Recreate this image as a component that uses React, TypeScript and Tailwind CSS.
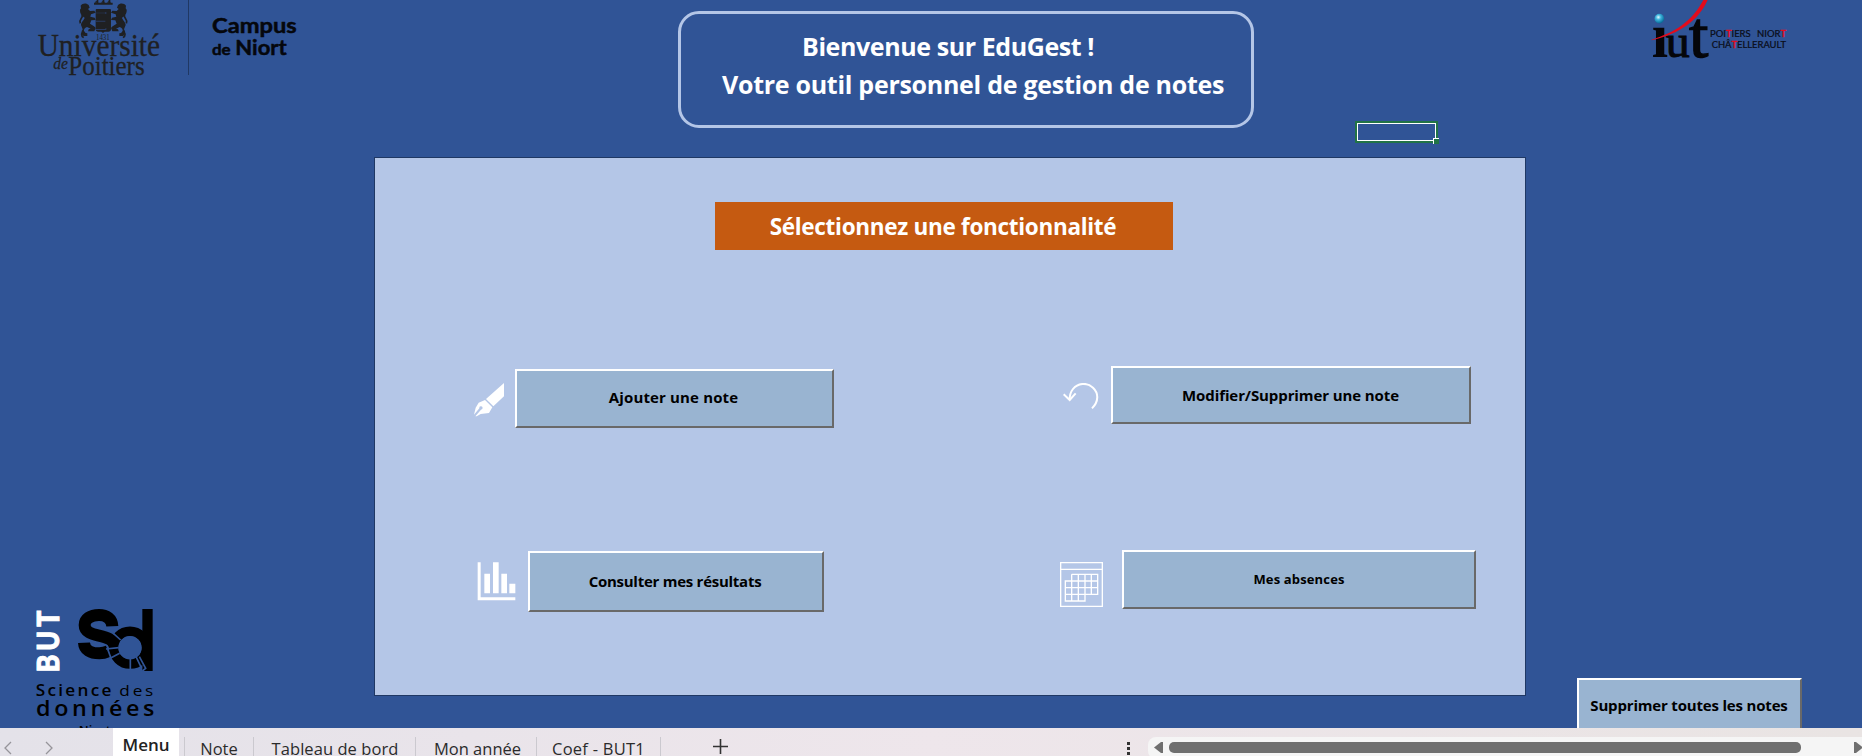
import type { ReactNode } from "react";

function UniversityLogo() {
  return (
    <svg width="340" height="100" viewBox="0 0 1020 300" className="block shrink-0" fill="#1f2022">
      <g>
        <path d="M282 8h56v6h-56zM290 0h5v10h-5zM308 0h5v10h-5zM326 0h5v10h-5z" />
        <path d="M284 8q5-10 11 0zM303 8q6-10 12 0zM321 8q6-10 12 0z" />
        <path d="M290 27h40q3 0 3 4v56q0 8-8 8h-11l-5 4-5-4h-9q-8 0-8-8V31q0-4 3-4z" />
        <path d="M288 38h26l5-3v8l-5-3h-26zM288 62h28v3h-28zM288 87h26l5-3v6h-31z" fill="#304f8d" opacity=".6" />
        <g id="lion">
          <path d="M242 17c5-8 18-9 24-2l3 8-5 4 6 6 13-1 4 6-14 5-2 7 13 3 3 7-13 1-4 10c6 5 14 6 17 13l-4 10h-19l2-6 6-2-11-5c-7 2-10 7-9 13l5 5 5 1v8h-11c-8-5-8-13-3-20l-5-13c0-9 9-14 11-22-9-5-15-14-14-24l3-4z" />
          <path d="M253 96c-11 1-10 12-2 17" fill="none" stroke="#1f2022" strokeWidth="5" />
          <path d="M241 70c-6-13 10-15 5-25" fill="none" stroke="#1f2022" strokeWidth="5" />
        </g>
        <use href="#lion" transform="translate(620 0) scale(-1 1)" />
      </g>
      <g fontFamily="Liberation Serif, serif">
        <text x="288" y="121" fontSize="22" textLength="41" lengthAdjust="spacingAndGlyphs">1431</text>
        <text x="113" y="167" fontSize="92" textLength="367" lengthAdjust="spacingAndGlyphs" stroke="#1f2022" strokeWidth=".8">Université</text>
        <text x="160" y="207" fontSize="52" fontStyle="italic" textLength="44" lengthAdjust="spacingAndGlyphs" stroke="#1f2022" strokeWidth=".8">de</text>
        <text x="205" y="225" fontSize="79" textLength="229" lengthAdjust="spacingAndGlyphs" stroke="#1f2022" strokeWidth=".8">Poitiers</text>
      </g>
      <rect x="564" y="0" width="3" height="225" fill="#203864" />
      <g fontFamily="Lato, sans-serif" fontWeight="700" fill="#05070c" stroke="#05070c" strokeWidth="1.5">
        <text x="636" y="99" fontSize="65" textLength="254" lengthAdjust="spacingAndGlyphs">Campus</text>
        <text x="636" y="166" fontSize="46" textLength="56" lengthAdjust="spacingAndGlyphs">de</text>
        <text x="706" y="166" fontSize="65" textLength="154" lengthAdjust="spacingAndGlyphs">Niort</text>
      </g>
    </svg>
  );
}

function IutLogo() {
  return (
    <svg width="180" height="70" viewBox="0 0 540 210" className="block shrink-0">
      <defs>
        <radialGradient id="ball" cx=".4" cy=".35" r=".65">
          <stop offset="0" stopColor="#e8fbff" />
          <stop offset=".4" stopColor="#3fb4dd" />
          <stop offset="1" stopColor="#066a96" />
        </radialGradient>
      </defs>
      <g fontFamily="Liberation Serif, serif" fill="#05060a" stroke="#05060a">
        <text x="65" y="170" fontSize="192" fontWeight="700" textLength="49" lengthAdjust="spacingAndGlyphs" strokeWidth="0">ı</text>
        <text x="107" y="170" fontSize="140" textLength="72" lengthAdjust="spacingAndGlyphs" strokeWidth="3">u</text>
        <text x="177" y="170" fontSize="196" textLength="58" lengthAdjust="spacingAndGlyphs" strokeWidth="4">t</text>
      </g>
      <path d="M65 119C135 96 183 68 220 0h13C205 62 150 101 65 121z" fill="#e30b1c" />
      <circle cx="88" cy="56" r="14.5" fill="url(#ball)" />
      <g fontFamily="Lato, sans-serif" fontSize="28" fill="#0a0d18" stroke="#0a0d18" strokeWidth=".7">
        <text x="240" y="111" textLength="122" lengthAdjust="spacingAndGlyphs">
          POI<tspan fill="#e30b1c" stroke="#e30b1c" strokeWidth="1.5">T</tspan>IERS
        </text>
        <text x="381" y="111" textLength="87" lengthAdjust="spacingAndGlyphs">
          NIOR<tspan fill="#e30b1c" stroke="#e30b1c" strokeWidth="1.5">T</tspan>
        </text>
        <text x="245" y="144" textLength="223" lengthAdjust="spacingAndGlyphs">
          CHÂ<tspan fill="#e30b1c" stroke="#e30b1c" strokeWidth="1.5">T</tspan>ELLERAULT
        </text>
      </g>
    </svg>
  );
}

function DataScienceLogo() {
  return (
    <svg width="200" height="138" viewBox="0 0 600 414" className="block shrink-0">
      <text transform="translate(177 247) rotate(-90) scale(.86 1)" fontFamily="Lato, sans-serif" fontWeight="900" fontSize="93" letterSpacing="14" fill="#fff" stroke="#fff" strokeWidth="3">BUT</text>
      <g fill="none" stroke="#000">
        <path d="M337 109C336 86 319 75 297 75c-26 0-43 12-43 30 0 22 22 27 43 32 25 6 42 11 46 29M252 158c1 22 20 32 46 32 10 0 18-2 27-6" strokeWidth="36" />
        <circle cx="390" cy="173" r="49" strokeWidth="29" />
      </g>
      <path d="M427 57h31v186h-31z" />
      <circle cx="390" cy="173" r="35" fill="#305496" />
      <g stroke="#305496" strokeWidth="5" fill="none">
        <path d="M340 130L362 150M318 177l38-4M325 208l34-18M391 200v40M408 200l17 35M418 200l19 35-10 8" />
        <path d="M323 178l10 27" />
      </g>
      <g fontFamily="Open Sans, sans-serif" fill="#000">
        <text transform="translate(107 318) scale(1.12 1)" fontSize="46" fontWeight="600" textLength="203" lengthAdjust="spacing">Science</text>
        <text transform="translate(358 318) scale(1.12 1)" fontSize="46" textLength="91" lengthAdjust="spacing">des</text>
        <text transform="translate(108 378) scale(1.06 1)" fontSize="66" fontWeight="600" textLength="335" lengthAdjust="spacing">données</text>
        <text x="236" y="436" fontSize="38" fontWeight="600" textLength="96" lengthAdjust="spacing">Niort</text>
      </g>
    </svg>
  );
}

function PenIcon() {
  return (
    <svg width="30" height="34" viewBox="0 0 90 102" fill="#fff" className="block shrink-0">
      <path d="M90 0v40L58 70 36 48z" />
      <path d="M33 51l22 22-10 17-25 3-12 7H4l17-20a5 5 0 1 0-5-4L0 95l5-21 9-15z" />
    </svg>
  );
}

function ChartIcon() {
  return (
    <svg width="39" height="39" viewBox="0 0 117 117" fill="#fff" className="block shrink-0">
      <path d="M2 1h9v105h104v9H2zM22 35h17v59H22zM48 1h17v93H48zM73 35h17v59H73zM97 65h18v29H97z" />
    </svg>
  );
}

function UndoIcon() {
  return (
    <svg width="36" height="27" viewBox="0 0 108 81" fill="none" stroke="#fff" strokeWidth="6" className="block shrink-0">
      <path d="M87 76C108 55 107 30 90 14 72-3 44 0 30 18c-8 10-10 20-10 32" />
      <path d="M2 34l18 17 18-20" />
    </svg>
  );
}

function CalendarIcon() {
  return (
    <svg width="43" height="45" viewBox="0 0 129 135" fill="none" stroke="#fff" strokeWidth="4" className="block shrink-0">
      <path d="M2 2h125v131H2zM2 22h125" />
      <path d="M35 37h78v60H75v20H16V57h97M35 37v80M55 37v80M75 37v60M94 37v60M16 77h97M16 97h59" />
    </svg>
  );
}

function RaisedButton({ className, children }: { className: string; children: ReactNode }) {
  return (
    <button
      className={
        "flex shrink-0 items-center justify-center whitespace-nowrap border-2 border-t-white border-l-white border-r-[#696969] border-b-[#696969] bg-[#99b4d1] font-bold text-black " +
        className
      }
    >
      {children}
    </button>
  );
}

function SheetTabs() {
  const tab = "flex h-[19px] shrink-0 items-start justify-center border-r border-[#cbc9cf] whitespace-nowrap leading-[23px]";
  return (
    <footer className="flex h-7 shrink-0 overflow-hidden bg-linear-to-r from-[#e4e2e9] via-[#eee6eb] to-[#e9e4e3] text-[16.5px] text-[#2b2b2b]">
      <div className="flex w-[113px] shrink-0 gap-[32px] pt-[13px] pl-[3px]">
        {["M8 1L2 7l6 6", "M2 1l6 6-6 6"].map((d) => (
          <svg key={d} width="9" height="14" viewBox="0 0 9 14" fill="none" stroke="#96949a" strokeWidth="1.3">
            <path d={d} />
          </svg>
        ))}
      </div>
      <div className="flex w-[66px] shrink-0 justify-center bg-white text-[17px] leading-[33px] font-semibold text-[#222]">
        <span>Menu</span>
      </div>
      <div className="flex items-start pt-[9px]">
        <div className={tab + " w-[6px]"} />
        <div className={tab + " w-[69px]"}>Note</div>
        <div className={tab + " w-[162px] pl-px tracking-[0.06px]"}>Tableau de bord</div>
        <div className={tab + " w-[121px] pl-[3px]"}>Mon année</div>
        <div className={tab + " w-[124px]"}>
          <span className="tracking-[0.25px]">Coef - BUT1</span>
        </div>
      </div>
      <svg width="15" height="15" viewBox="0 0 15 15" className="mt-[11px] ml-[52px] shrink-0" stroke="#333" strokeWidth="1.6">
        <path d="M0 7.5h15M7.5 0v15" />
      </svg>
      <div className="mt-[14px] ml-auto flex w-[21px] shrink-0 flex-col gap-[2px]">
        <i className="size-[3px] bg-[#333]" />
        <i className="size-[3px] bg-[#333]" />
        <i className="size-[3px] bg-[#333]" />
      </div>
      <div className="mt-[9px] flex h-[22px] w-[714px] shrink-0 items-start overflow-hidden rounded-l-lg bg-[#f5f5f5] pt-[5px] pl-[6px]">
        <svg width="9" height="11" viewBox="0 0 9 11" fill="#6f6f6f" className="shrink-0">
          <path d="M9 0v11H7L0 5.5 7 0z" />
        </svg>
        <div className="ml-[6px] h-[11px] w-[632px] shrink-0 rounded-[5px] bg-[#6f6f6f]" />
        <svg width="9" height="11" viewBox="0 0 9 11" fill="#6f6f6f" className="ml-[53px] shrink-0">
          <path d="M0 0v11h2l7-5.5L2 0z" />
        </svg>
      </div>
    </footer>
  );
}

export default function App() {
  return (
    <div className="flex h-screen w-full flex-col overflow-hidden bg-[#305496] font-['Open_Sans',sans-serif]">
      <main className="relative grid h-[728px] shrink-0 grid-cols-[374px_1152px_1fr] overflow-hidden">
        <aside className="flex flex-col justify-between">
          <UniversityLogo />
          <DataScienceLogo />
        </aside>

        <section className="flex flex-col pt-[11px]">
          <header className="ml-[304px] flex h-[117px] w-[576px] flex-col rounded-[21px] border-3 border-[#b4c6e7] pt-[13px] font-bold whitespace-pre text-white">
            <div className="pl-[121px] text-[25px] leading-[38px] tracking-[-0.41px]">Bienvenue sur EduGest !</div>
            <div className="pl-[41px] text-[25px] leading-[38px] tracking-[-0.28px]">Votre outil personnel de gestion de notes</div>
          </header>

          <div className="mt-[29px] h-[539px] border border-[#1f3864] bg-[#b4c6e7]">
            <h1 className="mt-[44px] ml-[340px] flex h-[48px] w-[458px] items-center justify-center bg-[#c55a11] pt-[2px] pr-[2px] text-[22.5px] font-bold tracking-[-0.3px] whitespace-nowrap text-white">
              Sélectionnez une fonctionnalité
            </h1>
            <div className="mt-[116px] flex items-start pl-[99px]">
              <div className="mt-[17px]"><PenIcon /></div>
              <RaisedButton className="mt-[3px] ml-[11px] h-[59px] w-[319px] pr-[2px] pb-[2px] text-[15px] tracking-[0.15px]">Ajouter une note</RaisedButton>
              <div className="mt-[17px] ml-[229px]"><UndoIcon /></div>
              <RaisedButton className="ml-[12px] h-[58px] w-[360px] pr-px text-[15px] tracking-[-0.1px]">Modifier/Supprimer une note</RaisedButton>
            </div>
            <div className="mt-[122px] flex items-start pl-[102px]">
              <div className="mt-[12px]"><ChartIcon /></div>
              <RaisedButton className="mt-px ml-[12px] h-[61px] w-[296px] pr-[2px] text-[15px] tracking-[-0.26px]">Consulter mes résultats</RaisedButton>
              <div className="mt-[12px] ml-[236px]"><CalendarIcon /></div>
              <RaisedButton className="ml-[19px] h-[59px] w-[354px] text-[13px] tracking-[0.15px]">Mes absences</RaisedButton>
            </div>
          </div>
        </section>

        <aside className="flex flex-col items-start justify-between">
          <div className="ml-[104px]"><IutLogo /></div>
          <RaisedButton className="-mb-[8px] ml-[51px] h-[58px] w-[225px] pr-px pb-[4px] text-[15px] tracking-[-0.18px]">Supprimer toutes les notes</RaisedButton>
        </aside>

        <div className="absolute top-[121px] left-[1355px] h-[22px] w-[83px] border-2 border-[#217346]">
          <div className="h-full w-full border border-white" />
          <div className="absolute -right-[3px] -bottom-[3px] size-[6px] border-t border-l border-white bg-[#217346]" />
        </div>
      </main>
      <SheetTabs />
    </div>
  );
}
